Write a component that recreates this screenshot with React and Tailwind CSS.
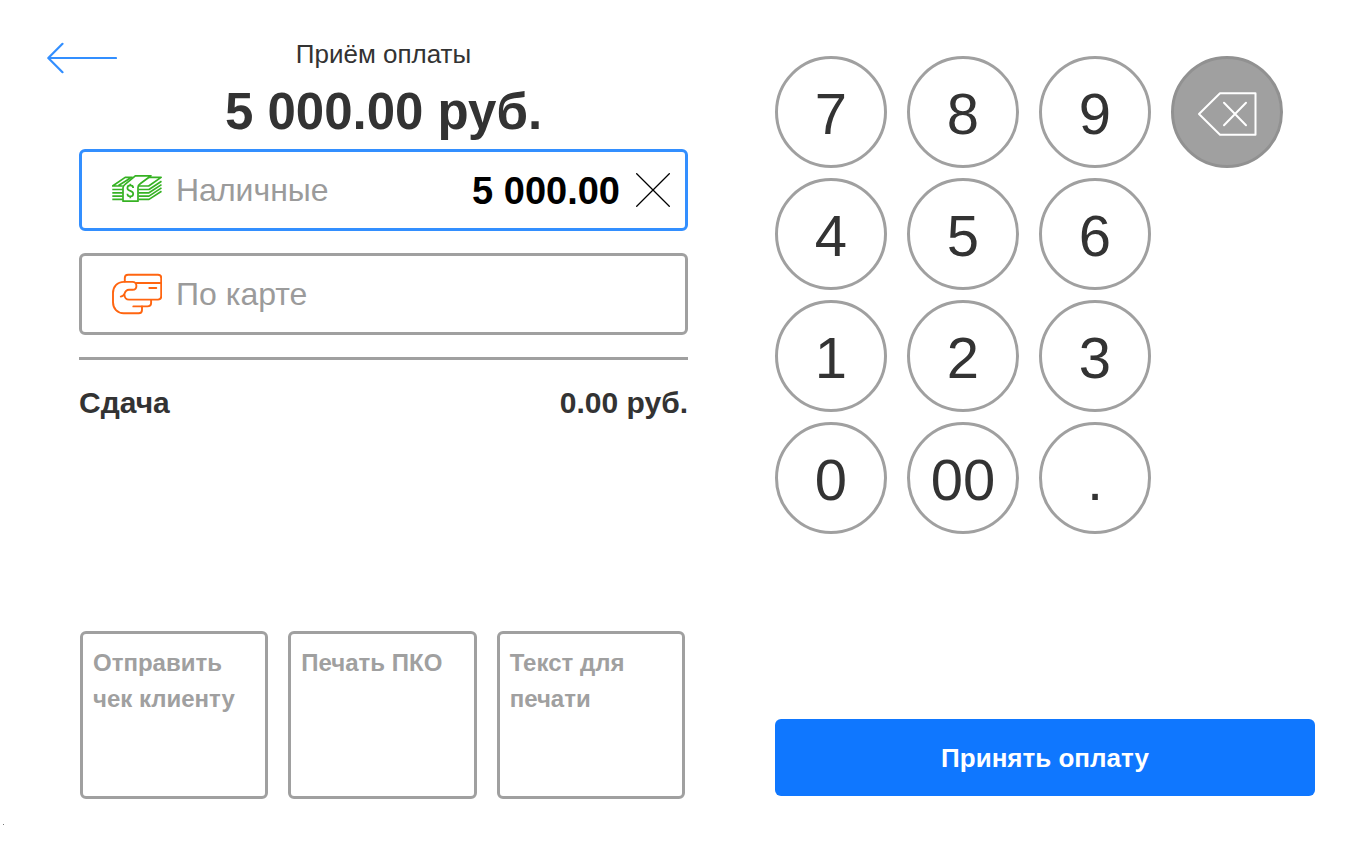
import React, { useState } from 'react';

const keys = ['7', '8', '9', 'back', '4', '5', '6', '', '1', '2', '3', '', '0', '00', '.'];

const actions = ['Отправить чек клиенту', 'Печать ПКО', 'Текст для печати'];

const BackArrow = () => (
    <svg width="70" height="32" viewBox="0 0 70 32" fill="none" stroke="#338fff" strokeWidth="2.2" strokeLinecap="round" strokeLinejoin="round">
        <path d="M69 16H1.5M15.5 1.8L1.3 16l14.2 14.2" />
    </svg>
);

const CashIcon = () => (
    <svg width="50" height="32" viewBox="0 0 50 32" fill="none" stroke="#36b223" strokeWidth="1.7" strokeLinejoin="round" className="shrink-0">
        <path d="M10.8 12H0.6L13.2 3.4h7.5M6.5 11.5L18.5 4" />
        <path d="M0.3 15.5H10.8M0.3 18.8H10.8M0.3 22.1H10.8M0.3 25.4H10.8" />
        <path d="M11 27.2V14c0-1.5 0.5-2.5 1.8-3.4L23.3 1.8H39L28.5 9.5c-1.8 1.2-2.5 2.3-2.5 4v13.7z" />
        <path d="M36.5 3.4h12.6L36.7 12H26.5" />
        <path d="M26.5 15.5H37l12.5-8.2M26.5 18.8H37l12.5-8.2M26.5 22.1H37l12.5-8.2M26.5 25.4H37l12.5-8.2" />
        <path d="M21.2 14c0-1.6-1.2-2.6-2.9-2.6s-2.9 1-2.9 2.6 1.2 2.3 2.9 2.9 2.9 1.2 2.9 2.8-1.2 2.7-2.9 2.7-2.9-1.1-2.9-2.7M18.3 9.8v1.6M18.3 22.3V24.2" />
    </svg>
);

const CardIcon = () => (
    <svg width="50" height="42" viewBox="0 0 50 42" fill="none" stroke="#ff6510" strokeWidth="1.9" strokeLinecap="round" strokeLinejoin="round" className="shrink-0">
        <path d="M12.8 8.5V5c0-2 1.2-3.3 3.3-3.3H46c2 0 3.2 1.3 3.2 3.3v18.3c0 2-1.2 3.3-3.2 3.3H17c-2.6 0-4.5-2-4.5-4.6" />
        <path d="M24.5 10h24.7M37.3 15h7" />
        <path d="M8.8 23.6c2.6-0.4 3.3-1.3 3.8-3 0.6-2 1.8-3.9 4.4-3.9h3.5c2.4 0 3.9-1.6 3.9-3.8 0-2.4-1.6-4-4-4h-8.4C5 8.9 1 13.8 1 20v9.3c0 6.3 4.4 11 10.7 11h15c2 0 3.3-1.3 3.3-3.3v-3.6" />
        <path d="M21.3 33.4h14c2.2 0 3.8-1.4 3.8-3.4v-3" />
    </svg>
);

const ClearIcon = () => (
    <svg width="34" height="34" viewBox="0 0 34 34" fill="none" stroke="#000" strokeWidth="1.3">
        <path d="M0.3 0.3l33.4 33.4M33.7 0.3L0.3 33.7" />
    </svg>
);

const BackspaceIcon = () => (
    <svg width="60" height="44" viewBox="0 0 60 44" fill="none" stroke="#fff" strokeWidth="2" strokeLinecap="round" strokeLinejoin="round">
        <path d="M2 22L23 1.3h35.5v41.4H23z" />
        <path d="M27 10.8l22 22.4M49 10.8L27 33.2" />
    </svg>
);

const PaymentField = ({ id, label, icon, value, active, onChange, onFocus, onClear }) => (
    <div className={`flex items-center h-[82px] pl-[30px] pr-[15px] border-3 rounded-md ${active ? 'border-[#338fff]' : 'border-[#a0a0a0]'}`}>
        {icon}
        <label htmlFor={id} className="ml-[14px] text-[32px] leading-10 text-[#9b9b9b] whitespace-nowrap">{label}</label>
        <input
            id={id}
            type="text"
            inputMode="decimal"
            value={value}
            onChange={(e) => onChange(e.target.value)}
            onFocus={onFocus}
            className="flex-1 min-w-0 pt-0.5 text-right text-[38px] leading-12 font-bold text-black outline-none"
        />
        {value && (
            <button type="button" aria-label="Очистить" onClick={onClear} className="ml-4 shrink-0 cursor-pointer">
                <ClearIcon />
            </button>
        )}
    </div>
);

const App = () => {
    const [cash, setCash] = useState('5 000.00');
    const [card, setCard] = useState('');
    const [active, setActive] = useState('cash');

    const handleKey = (key) => {
        const update = active === 'cash' ? setCash : setCard;
        update((prev) => (key === 'back' ? prev.slice(0, -1) : prev + key));
    };

    return (
        <div className="min-h-screen flex flex-col bg-white text-[#333] font-['Liberation_Sans',Arial,sans-serif]">
            <main className="flex-1 grid grid-cols-[minmax(0,1fr)_540px] gap-[87px] pl-[79px] pr-8">
                <section className="flex flex-col pt-[34px]">
                    <header className="grid grid-cols-[1fr_auto_1fr] items-center">
                        <a href="#back" aria-label="Назад" className="-ml-8 pt-2 justify-self-start">
                            <BackArrow />
                        </a>
                        <h1 className="text-[26px] leading-9">Приём оплаты</h1>
                    </header>
                    <p className="mt-2 mb-[7px] text-center text-[51px] leading-[60px] font-bold">5 000.00 руб.</p>

                    <div className="flex flex-col gap-[22px]">
                        <PaymentField
                            id="cash"
                            label="Наличные"
                            icon={<CashIcon />}
                            value={cash}
                            active={active === 'cash'}
                            onChange={setCash}
                            onFocus={() => setActive('cash')}
                            onClear={() => setCash('')}
                        />
                        <PaymentField
                            id="card"
                            label="По карте"
                            icon={<CardIcon />}
                            value={card}
                            active={active === 'card'}
                            onChange={setCard}
                            onFocus={() => setActive('card')}
                            onClear={() => setCard('')}
                        />
                        <div className="flex justify-between pt-[23px] border-t-3 border-[#a0a0a0] text-[30px] leading-10 font-bold">
                            <span>Сдача</span>
                            <span>0.00 руб.</span>
                        </div>
                    </div>

                    <div className="mt-auto grid grid-cols-3 gap-5 pl-px pr-[3px]">
                        {actions.map((action) => (
                            <button
                                key={action}
                                type="button"
                                className="h-[168px] flex items-start px-2.5 py-[11px] border-3 border-[#a0a0a0] rounded-md text-left text-2xl leading-9 font-bold text-[#a0a0a0] cursor-pointer"
                            >
                                {action}
                            </button>
                        ))}
                    </div>
                </section>

                <section className="flex flex-col pt-14 pb-[3px]">
                    <div className="grid grid-cols-[repeat(4,112px)] gap-x-5 gap-y-2.5">
                        {keys.map((key, i) => {
                            if (!key) return <span key={i} />;
                            if (key === 'back') {
                                return (
                                    <button
                                        key={i}
                                        type="button"
                                        aria-label="Удалить"
                                        onClick={() => handleKey(key)}
                                        className="size-28 pt-1 flex items-center justify-center rounded-full border-3 border-[#919191] bg-[#a0a0a0] cursor-pointer"
                                    >
                                        <BackspaceIcon />
                                    </button>
                                );
                            }
                            return (
                                <button
                                    key={i}
                                    type="button"
                                    onClick={() => handleKey(key)}
                                    className="size-28 pt-1 flex items-center justify-center rounded-full border-3 border-[#a0a0a0] text-[58px] leading-16 cursor-pointer"
                                >
                                    {key}
                                </button>
                            );
                        })}
                    </div>
                    <button type="button" className="mt-auto h-[77px] rounded-md bg-[#0f77ff] text-[26px] leading-9 font-bold text-white cursor-pointer">
                        Принять оплату
                    </button>
                </section>
            </main>

            {/* Status dot */}
            <footer className="h-[46px] pt-[25px] pl-[3px]">
                <div className="size-px bg-[#777]" />
            </footer>
        </div>
    );
};

export default App;
